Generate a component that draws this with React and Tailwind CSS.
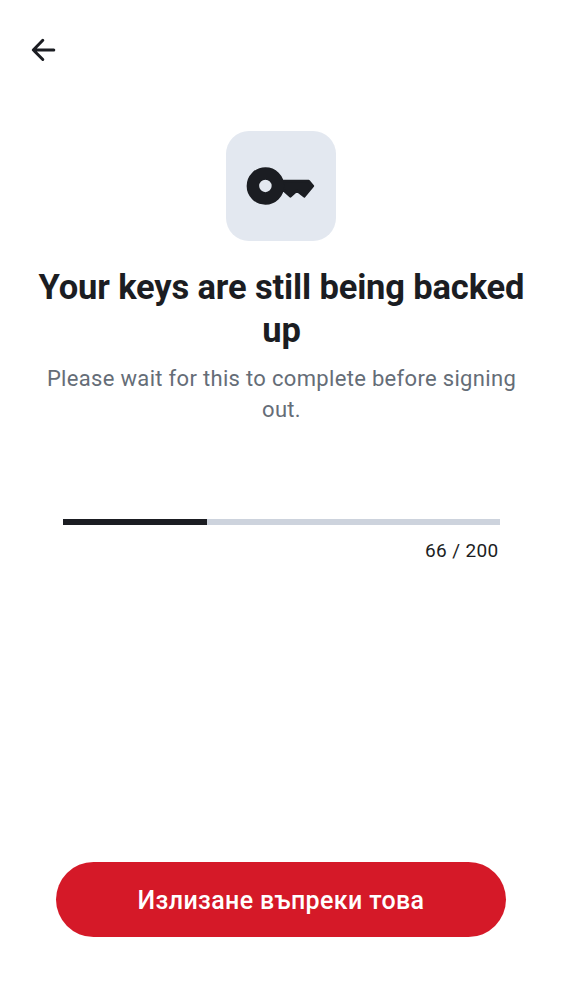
export default function App() {
  const done = 66;
  const total = 200;
  return (
    <div className="flex h-[1000px] w-[562px] flex-col bg-white font-[Roboto,sans-serif] text-[#1b1d22]">
      <header className="flex pt-[34px] pl-7">
        <button aria-label="Back" className="size-8">
          <svg viewBox="0 0 32 32" className="size-8" fill="none" stroke="currentColor" strokeWidth="3" strokeLinecap="round" strokeLinejoin="round">
            <path d="M25.8 16H5.6M14.8 6.3 5.3 16l9.5 9.5" />
          </svg>
        </button>
      </header>
      <main className="flex flex-1 flex-col items-center pt-[65px]">
        <div className="size-[110px] rounded-[23px] bg-[#e3e8f0]">
          <svg viewBox="0 0 110 110" className="size-[110px]">
            <path fill="currentColor" stroke="currentColor" strokeWidth="2.6" strokeLinejoin="round" d="M50 50h32.7l4.2 5-8.7 10.3-7.4-5.8-6.4 5.8-6.2-5.6H50z" />
            <circle cx="39.4" cy="54.9" r="12.5" fill="none" stroke="currentColor" strokeWidth="12.5" />
          </svg>
        </div>
        <h1 className="mt-[25px] w-[506px] pl-px text-center text-[34.5px] leading-[42.5px] font-bold tracking-[-0.15px]">Your keys are still being backed up</h1>
        <p className="mt-3 w-[506px] pl-px text-center text-[22px] leading-[31px] tracking-[0.32px] text-[#656d77]">Please wait for this to complete before signing out.</p>
        <div className="mt-[94px] h-1.5 w-[437px] bg-[#cdd3dd]">
          <div className="h-full bg-[#1b1d22]" style={{ width: `${(done / total) * 100}%` }} />
        </div>
        <div className="mt-3 w-[437px] pr-px text-right text-[19px] leading-[27px] tracking-[0.34px]">{done} / {total}</div>
      </main>
      <footer className="px-14 pb-[63px]">
        <button className="h-[75px] w-full rounded-full bg-[#d51928] pt-0.5 text-[25px] font-medium tracking-[0.36px] text-white">Излизане въпреки това</button>
      </footer>
    </div>
  );
}
